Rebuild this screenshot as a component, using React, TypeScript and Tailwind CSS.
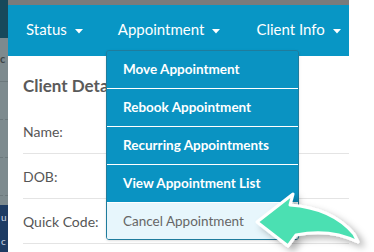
import React from "react";

const FONT = { fontFamily: "Lato, 'Open Sans', Arial, sans-serif" };

function Caret() {
  return (
    <svg width="8" height="5" viewBox="0 0 8 5" className="ml-[8px] mt-[3px]">
      <path d="M0 0 L8 0 L4 4.5 Z" fill="#ffffff" />
    </svg>
  );
}

function NavItem({ label, className = "" }: { label: string; className?: string }) {
  return (
    <div className={`flex items-center text-[15px] text-white ${className}`}>
      <span>{label}</span>
      <Caret />
    </div>
  );
}

function Row({ label }: { label: string }) {
  return (
    <div className="flex h-[45px] items-center border-b border-[#e4e4e4] text-[14px] text-[#565656]">
      {label}
    </div>
  );
}

const MENU = [
  "Move Appointment",
  "Rebook Appointment",
  "Recurring Appointments",
  "View Appointment List",
];

export default function App() {
  return (
    <div className="relative flex h-[252px] w-[374px] overflow-hidden bg-white" style={FONT}>
      {/* dimmed page behind the panel */}
      <div className="flex w-[8px] flex-col overflow-hidden">
        <div className="h-[38px] bg-[#17495b]" />
        <div className="flex h-[167px] flex-col bg-[#7d8a8e]">
          <div className="flex h-[44px] items-center border-b border-[#6c787c] text-[11px] font-bold text-[#3d4649]">
            c
          </div>
          <div className="h-[38px] border-b border-dashed border-[#6c787c]" />
          <div className="h-[38px] border-b border-dashed border-[#6c787c]" />
          <div className="h-[38px] border-b border-dashed border-[#6c787c]" />
        </div>
        <div className="flex flex-1 flex-col bg-[#1d3b63] text-[10px] text-[#c8d3e2]">
          <div className="flex h-[20px] items-end pl-[1px]">u</div>
          <div className="flex h-[24px] items-end pl-[1px]">c</div>
        </div>
      </div>

      <div className="flex w-[341px] flex-col">
        <div className="h-[5px] bg-[#7b7b7b]" />
        <div className="flex h-[51px] items-center bg-[#0896c5] pl-[18px] pb-[2px]">
          <NavItem label="Status" />
          <NavItem label="Appointment" className="ml-[35px]" />
          <NavItem label="Client Info" className="ml-[36px]" />
        </div>
        <div className="flex flex-1 flex-col pl-[15px]">
          <div className="flex h-[53px] items-start pt-[17px] text-[17px] leading-[25px] font-bold text-[#5a5a5a]">
            Client Details
          </div>
          <Row label="Name:" />
          <Row label="DOB:" />
          <Row label="Quick Code:" />
        </div>
      </div>

      {/* dropdown menu */}
      <div className="absolute left-[106px] top-[50px] w-[193px] overflow-hidden rounded-[3px] border border-[#1f7c9d] shadow-sm">
        {MENU.map((m) => (
          <div
            key={m}
            className="flex h-[38px] items-center border-b border-white bg-[#0a93c2] pl-[16px] text-[13.5px] font-bold text-white"
          >
            {m}
          </div>
        ))}
        <div className="flex h-[36px] items-center bg-[#e7f6fc] pl-[16px] text-[13.5px] text-[#666666]">
          Cancel Appointment
        </div>
      </div>

      {/* callout arrow */}
      <svg className="absolute left-0 top-0" width="374" height="252" viewBox="0 0 374 252">
        <defs>
          <filter id="sh" x="-20%" y="-20%" width="150%" height="160%">
            <feDropShadow dx="5" dy="4" stdDeviation="3.5" floodColor="#000" floodOpacity="0.3" />
          </filter>
        </defs>
        <path
          d="M257 222 L293 194 L290 205 Q332 208 354 234 L358 242 Q330 228 296 235 L288 246 Z"
          fill="#4be0b2"
          stroke="#ffffff"
          strokeWidth="3"
          strokeLinejoin="round"
          filter="url(#sh)"
        />
      </svg>
    </div>
  );
}
